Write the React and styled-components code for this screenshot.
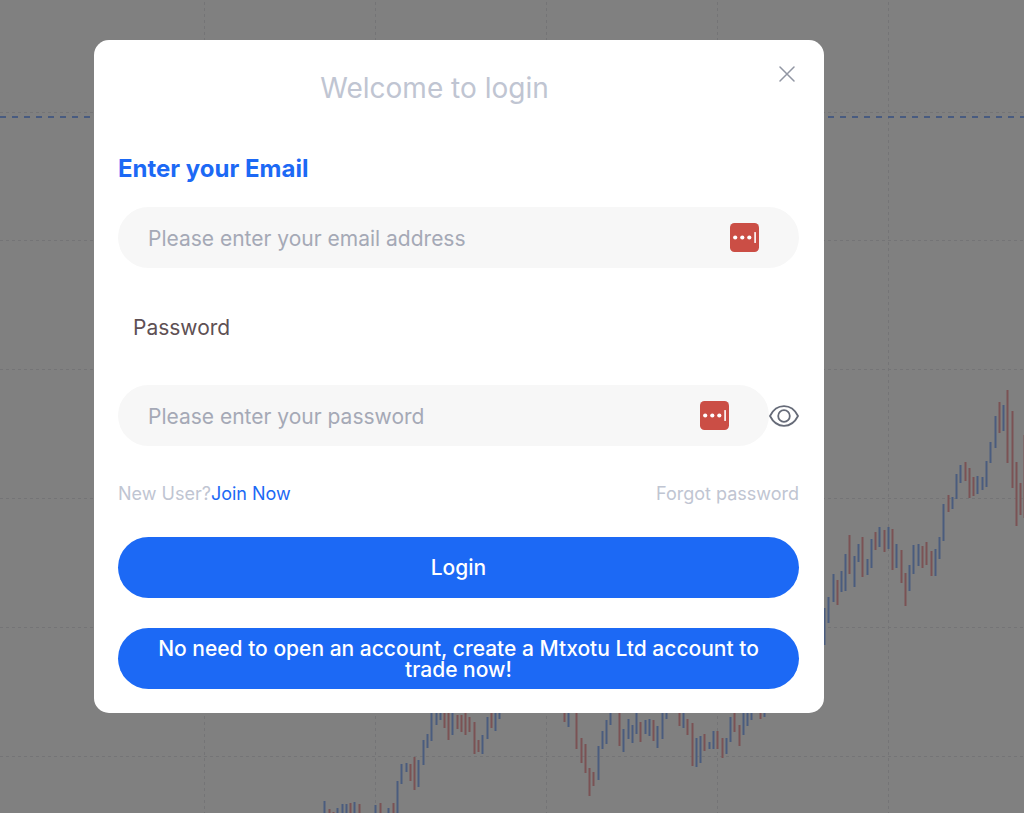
import React, { useState } from "react"
import styled, { createGlobalStyle } from "styled-components"

const GlobalStyle = createGlobalStyle`
  :root {
    --primaryColor: #1c69f5;
    --mutedText: #c0c5d2;
    --fieldBackground: #f7f7f7;
  }
  * {
    box-sizing: border-box;
  }
  body {
    margin: 0;
    background: #808080;
    font-family: Inter, "Liberation Sans", sans-serif;
  }
  button,
  input {
    font-family: inherit;
  }
`

const columns = [204, 375, 546, 717, 888]
const rows = [112, 240, 369, 498, 627, 756]

// x, high, low
const rising = [
  [324, 801, 813], [337, 808, 813], [342, 804, 813], [346, 804, 813],
  [354, 802, 813], [375, 805, 813], [388, 808, 813], [397, 781, 813],
  [401, 764, 784], [406, 763, 772], [418, 760, 787], [423, 740, 765],
  [427, 734, 748], [431, 708, 741], [436, 708, 725], [440, 708, 720],
  [452, 708, 735], [482, 735, 754], [487, 717, 739], [495, 708, 731],
  [499, 708, 719], [568, 708, 727], [598, 746, 780], [602, 731, 749],
  [606, 720, 744], [610, 708, 725], [623, 729, 752], [628, 719, 739],
  [632, 725, 743], [636, 708, 734], [645, 720, 734], [649, 719, 736],
  [657, 726, 748], [662, 708, 739], [666, 708, 719], [683, 708, 728],
  [696, 738, 767], [700, 736, 763], [709, 742, 749], [713, 731, 749],
  [726, 738, 754], [730, 717, 742], [743, 708, 735], [747, 708, 726],
  [751, 708, 720], [764, 708, 717], [824, 608, 645], [828, 597, 623],
  [833, 574, 602], [841, 571, 592], [845, 554, 591], [854, 556, 587],
  [858, 544, 562], [867, 559, 575], [871, 539, 568], [879, 527, 547],
  [888, 527, 549], [896, 544, 568], [909, 565, 591], [913, 545, 574],
  [918, 544, 566], [935, 549, 576], [939, 537, 559], [943, 504, 541],
  [952, 497, 509], [956, 474, 499], [960, 465, 483], [977, 476, 494],
  [982, 477, 490], [986, 461, 487], [990, 442, 463], [995, 416, 448],
  [1003, 405, 431],
]

const falling = [
  [329, 809, 813], [333, 812, 813], [350, 803, 813], [359, 804, 813],
  [380, 803, 813], [393, 803, 813], [410, 764, 781], [414, 757, 790],
  [444, 708, 728], [448, 708, 740], [457, 715, 729], [461, 715, 732],
  [465, 708, 735], [469, 717, 732], [474, 722, 754], [478, 740, 752],
  [491, 708, 728], [564, 708, 722], [576, 708, 749], [581, 738, 763],
  [585, 744, 773], [589, 768, 796], [593, 772, 786], [619, 708, 746],
  [640, 722, 742], [653, 720, 741], [679, 708, 726], [687, 719, 735],
  [692, 723, 766], [704, 734, 751], [717, 731, 749], [722, 738, 758],
  [734, 708, 732], [739, 725, 746], [760, 708, 719], [837, 580, 605],
  [849, 535, 574], [862, 537, 577], [875, 532, 550], [884, 530, 552],
  [892, 529, 570], [901, 550, 583], [905, 573, 606], [922, 546, 568],
  [926, 542, 565], [931, 551, 576], [948, 495, 512], [965, 462, 481],
  [969, 468, 498], [973, 477, 496], [999, 402, 433], [1007, 390, 463],
  [1012, 411, 488], [1016, 462, 526], [1020, 483, 515], [1024, 435, 518],
]

const toPath = candles =>
  candles.map(([x, high, low]) => `M${x + 0.5} ${high}V${low}`).join("")

const Chart = () => (
  <ChartCanvas
    viewBox="0 0 1024 813"
    preserveAspectRatio="xMidYMid slice"
    aria-hidden="true"
  >
    <g stroke="#747476" strokeDasharray="3 3" fill="none">
      <path d={columns.map(x => `M${x + 0.5} 2V813`).join("")} />
      <path d={rows.map(y => `M0 ${y + 0.5}H1024`).join("")} />
    </g>
    <path d="M0 117H1024" stroke="#485b80" strokeWidth="2" strokeDasharray="6 6" />
    <path d={toPath(rising)} stroke="#4a5c7e" strokeWidth="2" />
    <path d={toPath(falling)} stroke="#7b5254" strokeWidth="2" />
  </ChartCanvas>
)

const CloseIcon = () => (
  <svg width="16" height="16" viewBox="0 0 16 16" fill="none" aria-hidden="true">
    <path
      d="M1 1 15 15M15 1 1 15"
      stroke="#9196a3"
      strokeWidth="1.5"
      strokeLinecap="round"
    />
  </svg>
)

const EyeIcon = () => (
  <svg width="30" height="22" viewBox="0 0 30 22" fill="none" aria-hidden="true">
    <g stroke="#666b78" strokeWidth="1.8" strokeLinejoin="round">
      <path d="M1 11C4 5 9 1.2 15 1.2S26 5 29 11C26 17 21 20.8 15 20.8S4 17 1 11Z" />
      <circle cx="15" cy="11" r="5.8" />
    </g>
  </svg>
)

const VaultIcon = () => (
  <svg width="29" height="29" viewBox="0 0 29 29" aria-hidden="true">
    <rect width="29" height="29" rx="4.5" fill="#cb4e45" />
    <g fill="#fff">
      <circle cx="5.2" cy="14.5" r="2.1" />
      <circle cx="12.3" cy="14.5" r="2.1" />
      <circle cx="19.3" cy="14.5" r="2.1" />
      <rect x="24.3" y="9" width="1.6" height="11" rx="0.5" />
    </g>
  </svg>
)

const App = () => {
  const [email, setEmail] = useState("")
  const [password, setPassword] = useState("")
  const [visible, setVisible] = useState(false)

  return (
    <Page>
      <GlobalStyle />
      <Chart />
      <Modal role="dialog" aria-labelledby="login-title">
        <Header>
          <Title id="login-title">Welcome to login</Title>
          <IconButton type="button" aria-label="Close">
            <CloseIcon />
          </IconButton>
        </Header>
        <form onSubmit={e => e.preventDefault()}>
          <EmailLabel htmlFor="email">Enter your Email</EmailLabel>
          <Field>
            <Pill>
              <input
                type="email"
                id="email"
                placeholder="Please enter your email address"
                value={email}
                onChange={e => setEmail(e.target.value)}
              />
              <IconButton type="button" aria-label="Fill email">
                <VaultIcon />
              </IconButton>
            </Pill>
          </Field>
          <PasswordLabel htmlFor="password">Password</PasswordLabel>
          <Field>
            <Pill>
              <input
                type={visible ? "text" : "password"}
                id="password"
                placeholder="Please enter your password"
                value={password}
                onChange={e => setPassword(e.target.value)}
              />
              <IconButton type="button" aria-label="Fill password">
                <VaultIcon />
              </IconButton>
            </Pill>
            <IconButton
              type="button"
              aria-label="Show password"
              onClick={() => setVisible(!visible)}
            >
              <EyeIcon />
            </IconButton>
          </Field>
          <Links>
            <span>
              New User?<JoinLink href="#join">Join Now</JoinLink>
            </span>
            <ForgotLink href="#forgot">Forgot password</ForgotLink>
          </Links>
          <Actions>
            <ActionButton type="submit">Login</ActionButton>
            <ActionButton type="button">
              No need to open an account, create a Mtxotu Ltd account to trade
              now!
            </ActionButton>
          </Actions>
        </form>
      </Modal>
    </Page>
  )
}

const Page = styled.main`
  position: relative;
  display: flex;
  align-items: flex-start;
  min-height: 100vh;
  padding: 40px 200px 40px 94px;
  @media (max-width: 800px) {
    padding: 40px 16px;
  }
`

const ChartCanvas = styled.svg`
  position: absolute;
  inset: 0;
  width: 100%;
  height: 100%;
`

const Modal = styled.section`
  position: relative;
  flex: 1;
  min-width: 0;
  padding: 24px 25px 24px 24px;
  border-radius: 15px;
  background: #fff;
`

const Header = styled.header`
  display: flex;
  align-items: flex-start;
  gap: 24px;
  margin-bottom: 41px;
`

const Title = styled.h1`
  flex: 1;
  margin: 0;
  color: var(--mutedText);
  font-size: 28px;
  font-weight: 400;
  line-height: 48px;
  text-align: center;
`

const IconButton = styled.button`
  display: flex;
  flex: none;
  align-items: center;
  justify-content: center;
  min-width: 24px;
  min-height: 20px;
  padding: 0;
  border: 0;
  background: none;
  cursor: pointer;
`

const EmailLabel = styled.label`
  display: block;
  margin-bottom: 22px;
  color: var(--primaryColor);
  font-size: 24px;
  font-weight: 700;
  line-height: 32px;
`

const PasswordLabel = styled.label`
  display: block;
  margin: 44px 0 41px;
  padding-left: 15px;
  color: #5e5054;
  font-size: 21px;
  line-height: 32px;
`

const Field = styled.div`
  display: flex;
  align-items: center;
`

const Pill = styled.div`
  display: flex;
  flex: 1;
  align-items: center;
  min-width: 0;
  height: 61px;
  padding: 0 40px 0 30px;
  border-radius: 31px;
  background: var(--fieldBackground);
  input {
    flex: 1;
    min-width: 0;
    height: 100%;
    padding: 2px 0 0;
    border: 0;
    outline: 0;
    background: none;
    color: #333;
    font-size: 21px;
  }
  input::placeholder {
    color: #a5a9b6;
    opacity: 1;
  }
`

const Links = styled.div`
  display: flex;
  justify-content: space-between;
  margin: 36px 0 31px;
  color: var(--mutedText);
  font-size: 18px;
  line-height: 24px;
`

const JoinLink = styled.a`
  color: var(--primaryColor);
  text-decoration: none;
`

const ForgotLink = styled.a`
  color: inherit;
  text-decoration: none;
`

const Actions = styled.div`
  display: flex;
  flex-direction: column;
  gap: 30px;
`

const ActionButton = styled.button`
  min-height: 61px;
  padding: 8px 30px;
  border: 0;
  border-radius: 31px;
  background: var(--primaryColor);
  color: #fff;
  font-size: 21px;
  font-weight: 500;
  line-height: 21px;
  cursor: pointer;
`

export default App
